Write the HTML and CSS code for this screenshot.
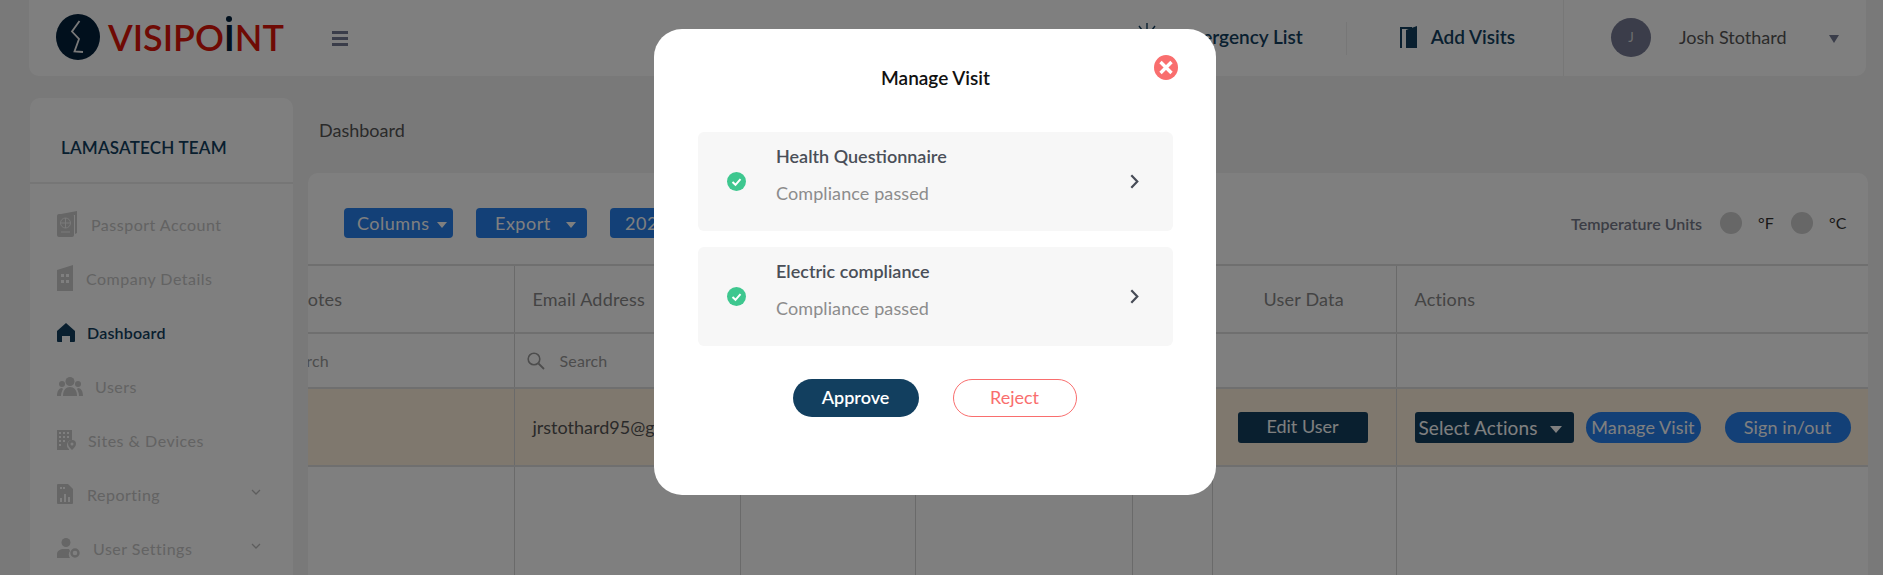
FILE: index.html
```html
<!DOCTYPE html>
<html lang="en">
<head>
    <meta charset="UTF-8">
    <meta name="viewport" content="width=device-width, initial-scale=1.0">
    <title>Visipoint Dashboard</title>
    <link rel="stylesheet" href="styles.css">
</head>
<body>
    <header class="topbar">
        <div class="logo">
            <svg class="logo-mark" viewBox="0 0 44 46" width="44" height="46">
                <ellipse cx="22" cy="23" rx="22" ry="23" fill="#03203b"/>
                <path d="M23.500 7 L16 17.500 L23 25 L18.500 37.500 L27 38" fill="none" stroke="#f2f2f2" stroke-width="1.800"/>
            </svg>
            <span class="logo-text">VISIPO<span class="logo-person">I</span>NT</span>
        </div>
        <div class="burger"><span></span><span></span><span></span></div>

        <div class="topbar-right">
            <a class="top-link emergency">
                <svg viewBox="0 0 22 24" width="22" height="24">
                    <path d="M11 0v6M3 3l3 4M19 3l-3 4M0 9l4 1M22 9l-4 1" stroke="#123f5f" stroke-width="1.400" fill="none"/>
                    <path d="M5 23v-7a6 6 0 0 1 12 0v7z" fill="#123f5f"/>
                </svg>
                Emergency List
            </a>
            <a class="top-link add-visits">
                <svg viewBox="0 0 17 22" width="17" height="22">
                    <path d="M0 22V1h12v2H2v19z" fill="#123f5f"/>
                    <path d="M6 4l11-4v22H6z" fill="#123f5f"/>
                </svg>
                Add Visits
            </a>
            <div class="user-box">
                <span class="avatar">J</span>
                <span class="user-name">Josh Stothard</span>
                <span class="caret caret-user"></span>
            </div>
        </div>
    </header>

    <div class="page">
        <aside class="sidebar">
            <div class="team-name">LAMASATECH TEAM</div>
            <ul class="nav">
                <li class="nav-item">
                    <svg class="nav-icon" viewBox="0 0 22 26" width="22" height="26">
                        <path d="M4 3l16-3v22l-2 1V4z" fill="#ccc"/>
                        <rect x="0" y="3" width="17" height="23" rx="2" fill="#ccc"/>
                        <circle cx="8.500" cy="12" r="5" fill="none" stroke="#f4f4f4" stroke-width="1"/>
                        <path d="M3.500 12h10M8.500 7v10" stroke="#f4f4f4" stroke-width="1"/>
                        <path d="M4 21h9" stroke="#f4f4f4" stroke-width="1.200"/>
                    </svg>
                    <span class="nav-label label-passport">Passport Account</span>
                </li>
                <li class="nav-item">
                    <svg class="nav-icon" viewBox="0 0 16 26" width="16" height="26">
                        <path d="M0 5l16-5v26H0z" fill="#ccc"/>
                        <path d="M4 9h3v3H4zM9 9h3v3H9zM4 15h3v3H4zM9 15h3v3H9z" fill="#fff"/>
                    </svg>
                    <span class="nav-label label-company">Company Details</span>
                </li>
                <li class="nav-item active">
                    <svg class="nav-icon" viewBox="0 0 18 19" width="18" height="19">
                        <path d="M9 0l9 8v10a1 1 0 0 1-1 1h-4v-6H5v6H1a1 1 0 0 1-1-1V8z" fill="#123f5f"/>
                    </svg>
                    <span class="nav-label label-dash">Dashboard</span>
                </li>
                <li class="nav-item">
                    <svg class="nav-icon" viewBox="0 0 26 19" width="26" height="19">
                        <circle cx="13" cy="4.500" r="4.500" fill="#ccc"/>
                        <circle cx="5" cy="7" r="3" fill="#ccc"/>
                        <circle cx="21" cy="7" r="3" fill="#ccc"/>
                        <path d="M6 19c0-6 3-9 7-9s7 3 7 9z" fill="#ccc"/>
                        <path d="M0 19c0-5 2-8 5-8l1 1c-1 2-2 4-2 7zM26 19c0-5-2-8-5-8l-1 1c1 2 2 4 2 7z" fill="#ccc"/>
                    </svg>
                    <span class="nav-label label-users">Users</span>
                </li>
                <li class="nav-item">
                    <svg class="nav-icon" viewBox="0 0 19 20" width="19" height="20">
                        <path d="M0 0h15v10a5 5 0 0 0-3 9v1H0z" fill="#ccc"/>
                        <path d="M2 2h2v2H2zM6 2h2v2H6zM10 2h2v2h-2zM2 6h2v2H2zM6 6h2v2H6zM10 6h2v2h-2zM2 10h2v2H2zM6 10h2v2H6zM2 14h2v2H2z" fill="#fff"/>
                        <path d="M15 10a4 4 0 0 1 4 4c0 2-2 4-4 6-2-2-4-4-4-6a4 4 0 0 1 4-4z" fill="#ccc"/>
                        <circle cx="15" cy="14" r="1.500" fill="#fff"/>
                    </svg>
                    <span class="nav-label label-sites">Sites &amp; Devices</span>
                </li>
                <li class="nav-item">
                    <svg class="nav-icon" viewBox="0 0 16 20" width="16" height="20">
                        <path d="M1 0h10l5 5v14a1 1 0 0 1-1 1H1a1 1 0 0 1-1-1V1a1 1 0 0 1 1-1z" fill="#ccc"/>
                        <path d="M3 14h2v4H3zM7 10h2v8H7zM11 13h2v5h-2zM3 3h2v2H3zM6 3h2v2H6z" fill="#fff"/>
                    </svg>
                    <span class="nav-label label-report">Reporting</span>
                    <svg class="nav-arrow" viewBox="0 0 10 6" width="10" height="6"><path d="M1 1l4 4 4-4" fill="none" stroke="#bbb" stroke-width="1.300"/></svg>
                </li>
                <li class="nav-item">
                    <svg class="nav-icon" viewBox="0 0 23 20" width="23" height="20">
                        <circle cx="9" cy="4.500" r="4.500" fill="#ccc"/>
                        <path d="M0 20v-4c0-3 3-5 7-5h5l1 2a6 6 0 0 0 0 7z" fill="#ccc"/>
                        <circle cx="18" cy="15" r="3.500" fill="none" stroke="#ccc" stroke-width="2.400"/>
                    </svg>
                    <span class="nav-label label-settings">User Settings</span>
                    <svg class="nav-arrow" viewBox="0 0 10 6" width="10" height="6"><path d="M1 1l4 4 4-4" fill="none" stroke="#bbb" stroke-width="1.300"/></svg>
                </li>
            </ul>
        </aside>

        <main class="content">
            <div class="breadcrumb">Dashboard</div>

            <section class="card">
                <div class="toolbar">
                    <button class="tool-btn btn-columns">Columns <span class="caret"></span></button>
                    <button class="tool-btn btn-export">Export <span class="caret"></span></button>
                    <button class="tool-btn btn-year">2023</button>

                    <div class="temp-units">
                        <span class="temp-title">Temperature Units</span>
                        <span class="radio"></span>
                        <span class="temp-label">°F</span>
                        <span class="radio"></span>
                        <span class="temp-label">°C</span>
                    </div>
                </div>

                <div class="table-wrap">
                    <table class="visits">
                        <colgroup>
                            <col class="col-notes"><col class="col-email"><col class="col-c"><col class="col-d"><col class="col-e"><col class="col-data"><col class="col-actions">
                        </colgroup>
                        <tr class="row-head">
                            <th class="head-notes">Notes</th>
                            <th>Email Address</th>
                            <th></th>
                            <th></th>
                            <th></th>
                            <th class="head-data">User Data</th>
                            <th>Actions</th>
                        </tr>
                        <tr class="row-search">
                            <td class="search-cell"><span class="search-text">Search</span></td>
                            <td class="search-cell">
                                <svg class="search-icon" viewBox="0 0 18 18" width="18" height="18">
                                    <circle cx="7" cy="7" r="5.800" fill="none" stroke="#9a9a9a" stroke-width="1.600"/>
                                    <path d="M11.500 11.500L17 17" stroke="#9a9a9a" stroke-width="1.800"/>
                                </svg>
                                <span class="search-text">Search</span>
                            </td>
                            <td></td><td></td><td></td><td></td><td></td>
                        </tr>
                        <tr class="row-visit">
                            <td></td>
                            <td class="cell-email">jrstothard95@gmail.com</td>
                            <td></td><td></td><td></td>
                            <td class="cell-edit"><button class="btn-edit">Edit User</button></td>
                            <td>
                                <div class="actions">
                                    <button class="btn-select">Select Actions <span class="caret"></span></button>
                                    <button class="btn-pill btn-manage">Manage Visit</button>
                                    <button class="btn-pill btn-sign">Sign in/out</button>
                                </div>
                            </td>
                        </tr>
                        <tr class="row-empty">
                            <td></td><td></td><td></td><td></td><td></td><td></td><td></td>
                        </tr>
                    </table>
                </div>
            </section>
        </main>
    </div>

    <div class="overlay">
        <div class="modal">
            <div class="modal-head">
                <h2 class="modal-title">Manage Visit</h2>
                <svg class="modal-close" viewBox="0 0 24 25" width="24" height="25">
                    <ellipse cx="12" cy="12.500" rx="12" ry="12.500" fill="#f96e6e"/>
                    <path d="M6.500 7l11 11M17.500 7l-11 11" stroke="#fff" stroke-width="3.400"/>
                </svg>
            </div>

            <div class="check-item">
                <svg class="check-icon" viewBox="0 0 19 19" width="19" height="19">
                    <circle cx="9.500" cy="9.500" r="9.500" fill="#3ec78f"/>
                    <path d="M5.500 10l3 2.800 5-5.600" fill="none" stroke="#fff" stroke-width="2"/>
                </svg>
                <div class="check-text">
                    <div class="check-name">Health Questionnaire</div>
                    <div class="check-state">Compliance passed</div>
                </div>
                <svg class="check-arrow" viewBox="0 0 9 15" width="9" height="15">
                    <path d="M1.300 1.200l6 6.300-6 6.300" fill="none" stroke="#474c57" stroke-width="2.200"/>
                </svg>
            </div>

            <div class="check-item">
                <svg class="check-icon" viewBox="0 0 19 19" width="19" height="19">
                    <circle cx="9.500" cy="9.500" r="9.500" fill="#3ec78f"/>
                    <path d="M5.500 10l3 2.800 5-5.600" fill="none" stroke="#fff" stroke-width="2"/>
                </svg>
                <div class="check-text">
                    <div class="check-name">Electric compliance</div>
                    <div class="check-state">Compliance passed</div>
                </div>
                <svg class="check-arrow" viewBox="0 0 9 15" width="9" height="15">
                    <path d="M1.300 1.200l6 6.300-6 6.300" fill="none" stroke="#474c57" stroke-width="2.200"/>
                </svg>
            </div>

            <div class="modal-buttons">
                <button class="btn-approve">Approve</button>
                <button class="btn-reject">Reject</button>
            </div>
        </div>
    </div>
</body>
</html>
```

FILE: styles.css
```css
* {
    box-sizing: border-box;
}

html, body {
    height: 575px;
    overflow: hidden;
}

body {
    margin: 0;
    padding: 0 15px 0 29px;
    font-family: Lato, "Liberation Sans", sans-serif;
    background-color: #f3f3f3;
    color: #555;
}

button {
    font-family: inherit;
    border: none;
    color: white;
    padding: 0;
}

.caret {
    display: inline-block;
    width: 0;
    height: 0;
    border-left: 5px solid transparent;
    border-right: 5px solid transparent;
    border-top: 6px solid white;
    vertical-align: middle;
}

/* top bar */
.topbar {
    display: flex;
    align-items: center;
    height: 76px;
    background-color: #fff;
    border-radius: 0 0 10px 10px;
    padding-left: 27px;
    margin-right: 2px;
}

.logo {
    display: flex;
    align-items: center;
    width: 276px;
    height: 100%;
    padding-bottom: 3px;
}

.logo-mark {
    flex: none;
}

.logo-text {
    margin-left: 8px;
    font-size: 36px;
    line-height: 1;
    font-weight: 600;
    color: #de1409;
}

.logo-person {
    position: relative;
    color: #03203b;
    font-weight: 700;
}

.logo-person::before {
    content: "";
    position: absolute;
    left: 50%;
    top: 1px;
    width: 6px;
    height: 6px;
    margin-left: -3px;
    border-radius: 50%;
    background-color: #03203b;
}

.burger {
    display: flex;
    flex-direction: column;
    gap: 3px;
    width: 16px;
}

.burger span {
    height: 3px;
    background-color: #747a94;
}

.topbar-right {
    display: flex;
    align-items: center;
    margin-left: auto;
    height: 100%;
}

.top-link {
    display: flex;
    align-items: center;
    padding-bottom: 3px;
    color: #123f5f;
    font-size: 19px;
    font-weight: 600;
}

.emergency {
    gap: 18px;
    height: 33px;
    padding-right: 43px;
    border-right: 1px solid #eee;
}

.emergency svg {
    margin-top: -4px;
}

.add-visits {
    gap: 14px;
    padding: 0 48px 3px 53px;
}

.user-box {
    display: flex;
    align-items: center;
    height: 100%;
    width: 303px;
    padding-left: 47px;
    padding-bottom: 2px;
    border-left: 1px solid #eee;
}

.avatar {
    display: flex;
    align-items: center;
    justify-content: center;
    width: 40px;
    height: 39px;
    border-radius: 50%;
    background-color: #767a94;
    color: #ddd;
    font-size: 13px;
}

.user-name {
    margin-left: 28px;
    font-size: 18px;
    color: #555;
}

.caret-user {
    margin-left: 43px;
    margin-top: 4px;
    border-top: 8px solid #747a94;
}

/* page */
.page {
    display: flex;
    gap: 15px;
    align-items: flex-start;
}

.sidebar {
    flex: none;
    width: 263px;
    height: 480px;
    margin-top: 22px;
    margin-left: 1px;
    background-color: #fff;
    border-radius: 10px 10px 0 0;
    overflow: hidden;
}

.team-name {
    height: 86px;
    padding: 38px 0 0 31px;
    border-bottom: 2px solid #ececec;
    font-size: 17px;
    line-height: 24px;
    font-weight: 600;
    letter-spacing: 0.200px;
    color: #123f5f;
}

.nav {
    list-style: none;
    margin: 0;
    padding: 13px 0 0 27px;
}

.nav-item {
    display: flex;
    align-items: center;
    height: 54px;
    padding-right: 32px;
    font-size: 16px;
    letter-spacing: 0.500px;
    color: #c6c6c6;
}

.nav-item.active {
    color: #123f5f;
    font-weight: 600;
    letter-spacing: 0.200px;
}

.nav-icon {
    flex: none;
}

.nav-label {
    flex: 1;
}

.label-passport { margin-left: 12px; }
.label-company { margin-left: 13px; }
.label-dash { margin-left: 12px; }
.label-users { margin-left: 12px; }
.label-sites { margin-left: 12px; }
.label-report { margin-left: 14px; }
.label-settings { margin-left: 13px; }

.nav-arrow {
    flex: none;
    margin-top: -4px;
}

/* main content */
.content {
    flex: 1;
    min-width: 0;
}

.breadcrumb {
    height: 97px;
    padding: 39px 0 0 11px;
    font-size: 18px;
    line-height: 30px;
    color: #555;
}

.card {
    height: 410px;
    background-color: #fff;
    border-radius: 10px 10px 0 0;
    overflow: hidden;
}

.toolbar {
    display: flex;
    align-items: center;
    gap: 23px;
    height: 93px;
    padding: 36px 22px 27px 36px;
    border-bottom: 2px solid #dedede;
}

.tool-btn {
    height: 30px;
    border-radius: 4px;
    background-color: #2680ee;
    font-size: 18px;
    letter-spacing: 0.500px;
    text-align: left;
}

.btn-columns {
    width: 109px;
    padding-left: 13px;
}

.btn-export {
    width: 111px;
    padding-left: 19px;
}

.btn-columns .caret {
    margin-left: 2px;
}

.btn-export .caret {
    margin-left: 10px;
}

.btn-year {
    width: 100px;
    padding-left: 15px;
}

.temp-units {
    display: flex;
    align-items: center;
    margin-left: auto;
}

.temp-title {
    font-size: 16px;
    font-weight: 600;
    color: #767a8a;
    margin-right: 18px;
}

.radio {
    width: 22px;
    height: 22px;
    border-radius: 50%;
    background-color: #cecece;
}

.temp-label {
    width: 49px;
    padding-left: 16px;
    margin-top: -2px;
    font-size: 16px;
    color: #333;
}

.temp-label:last-child {
    width: 33px;
}

/* table */
.table-wrap {
    overflow: hidden;
}

.visits {
    width: 1635px;
    margin-left: -75px;
    table-layout: fixed;
    border-collapse: collapse;
}

.col-notes { width: 281px; }
.col-email { width: 226px; }
.col-c { width: 175px; }
.col-d { width: 217px; }
.col-e { width: 80px; }
.col-data { width: 184px; }
.col-actions { width: 472px; }

.visits th,
.visits td {
    padding: 0;
    border-right: 1px solid #d4d4d4;
    border-bottom: 2px solid #dedede;
    text-align: left;
    vertical-align: middle;
}

.visits th:last-child,
.visits td:last-child {
    border-right: none;
}

.visits th {
    padding-left: 18px;
    font-size: 18px;
    font-weight: 400;
    letter-spacing: 0.200px;
    color: #888;
}

.visits th.head-notes {
    padding-left: 61px;
}

.visits th.head-data {
    padding-left: 51px;
}

.row-head { height: 67px; }
.row-search { height: 55px; }
.row-visit { height: 78px; background-color: #fff0dc; }
.row-empty { height: 120px; }

.visits .search-cell {
    padding: 0 0 2px 12px;
}

.search-cell {
    white-space: nowrap;
}

.search-icon {
    vertical-align: middle;
    margin-right: 11px;
}

.search-text {
    font-size: 16px;
    letter-spacing: 0.100px;
    color: #999;
    vertical-align: middle;
}

.search-cell:first-child .search-text {
    margin-left: 36px;
}

.visits .cell-email {
    padding-left: 18px;
    font-size: 18px;
    color: #555;
    white-space: nowrap;
    overflow: hidden;
}

.visits .cell-edit {
    padding-left: 25px;
}

.btn-edit {
    width: 130px;
    height: 31px;
    padding-bottom: 2px;
    border-radius: 3px;
    background-color: #123f5f;
    font-size: 18px;
}

.actions {
    display: flex;
    align-items: center;
    padding-left: 18px;
}

.btn-select {
    width: 159px;
    height: 31px;
    border-radius: 3px;
    background-color: #123f5f;
    font-size: 19px;
    letter-spacing: 0.100px;
    text-align: left;
    padding-left: 4px;
}

.btn-select .caret {
    margin-left: 8px;
    border-left-width: 6px;
    border-right-width: 6px;
    border-top-width: 7px;
}

.btn-pill {
    height: 31px;
    border-radius: 16px;
    background-color: #2680ee;
    font-size: 18px;
    letter-spacing: 0.100px;
}

.btn-manage {
    width: 115px;
    margin-left: 12px;
}

.btn-sign {
    width: 126px;
    margin-left: 24px;
}

/* modal */
.overlay {
    position: fixed;
    inset: 0;
    display: flex;
    justify-content: center;
    align-items: flex-start;
    padding: 29px 13px 0 0;
    background-color: rgba(0, 0, 0, 0.5);
}

.modal {
    width: 562px;
    height: 466px;
    padding: 26px 43px 0 44px;
    background-color: white;
    border-radius: 28px;
}

.modal-head {
    position: relative;
    height: 77px;
}

.modal-title {
    margin: 0;
    padding-top: 9px;
    font-size: 19px;
    line-height: 28px;
    font-weight: 600;
    color: #111;
    text-align: center;
}

.modal-close {
    position: absolute;
    right: -5px;
    top: 0;
}

.check-item {
    display: flex;
    align-items: center;
    height: 99px;
    margin-bottom: 16px;
    padding: 0 34px 0 29px;
    background-color: #f7f7f7;
    border-radius: 6px;
}

.check-icon {
    flex: none;
}

.check-text {
    flex: 1;
    margin-left: 30px;
    margin-top: -14px;
}

.check-name {
    font-size: 18px;
    line-height: 24px;
    font-weight: 600;
    color: #4a4f58;
}

.check-state {
    margin-top: 13px;
    font-size: 18px;
    line-height: 24px;
    letter-spacing: 0.100px;
    color: #8c8c8c;
}

.check-arrow {
    flex: none;
}

.modal-buttons {
    display: flex;
    justify-content: center;
    gap: 34px;
    padding-top: 17px;
    padding-right: 2px;
}

.btn-approve,
.btn-reject {
    height: 38px;
    padding-bottom: 2px;
    border-radius: 19px;
    font-size: 18px;
}

.btn-approve {
    width: 126px;
    background-color: #123f5f;
    font-weight: 600;
}

.btn-reject {
    width: 124px;
    background-color: white;
    border: 1px solid #f96e6e;
    color: #f96e6e;
}
```
